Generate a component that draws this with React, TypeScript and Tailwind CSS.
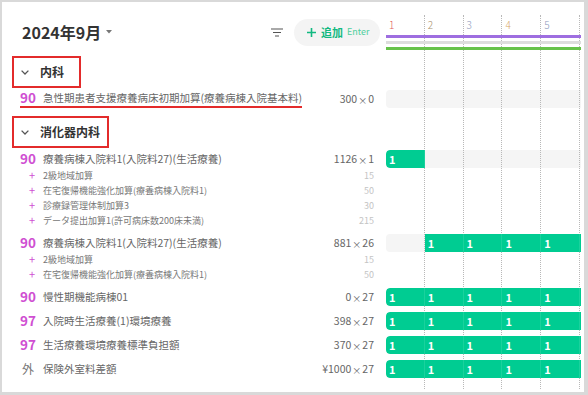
import React from 'react'

type Cell = 'e' | 'g'

interface Item {
  code: string
  name: string
  amount: string
  count: string
  cells: Cell[]
  subs?: Array<{ name: string; value: string }>
  underline?: boolean
  outside?: boolean
}

const days = [
  { d: 1, c: 'text-[#e05a5a]' },
  { d: 2, c: 'text-[#a8906c]' },
  { d: 3, c: 'text-[#8a98bb]' },
  { d: 4, c: 'text-[#d6a565]' },
  { d: 5, c: 'text-[#8a98bb]' },
]

const allGreen: Cell[] = ['g', 'g', 'g', 'g', 'g', 'g']

const naika: Item[] = [
  {
    code: '90',
    name: '急性期患者支援療養病床初期加算(療養病棟入院基本料)',
    amount: '300',
    count: '0',
    cells: ['e', 'e', 'e', 'e', 'e', 'e'],
    underline: true,
  },
]

const shoukaki: Item[] = [
  {
    code: '90',
    name: '療養病棟入院料1(入院料27)(生活療養)',
    amount: '1126',
    count: '1',
    cells: ['g', 'e', 'e', 'e', 'e', 'e'],
    subs: [
      { name: '2級地域加算', value: '15' },
      { name: '在宅復帰機能強化加算(療養病棟入院料1)', value: '50' },
      { name: '診療録管理体制加算3', value: '30' },
      { name: 'データ提出加算1(許可病床数200床未満)', value: '215' },
    ],
  },
  {
    code: '90',
    name: '療養病棟入院料1(入院料27)(生活療養)',
    amount: '881',
    count: '26',
    cells: ['e', 'g', 'g', 'g', 'g', 'g'],
    subs: [
      { name: '2級地域加算', value: '15' },
      { name: '在宅復帰機能強化加算(療養病棟入院料1)', value: '50' },
    ],
  },
  { code: '90', name: '慢性期機能病棟01', amount: '0', count: '27', cells: allGreen },
  { code: '97', name: '入院時生活療養(1)環境療養', amount: '398', count: '27', cells: allGreen },
  { code: '97', name: '生活療養環境療養標準負担額', amount: '370', count: '27', cells: allGreen },
  { code: '外', name: '保険外室料差額', amount: '¥1000', count: '27', cells: allGreen, outside: true },
]

const Chevron = () => (
  <svg width="8" height="5" viewBox="0 0 8 5" fill="none">
    <path d="M0.6 0.6 L4 4 L7.4 0.6" stroke="#555" strokeWidth="1.3" />
  </svg>
)

const SectionHeader: React.FC<{ title: string; width: string; top: string }> = ({ title, width, top }) => (
  <div className={`${top} h-[32px] ml-[10px] ${width} border-2 border-[#e32b2b] flex items-center pl-[7px]`}>
    <Chevron />
    <span className="ml-[11px] text-[12px] font-bold text-[#333]">{title}</span>
  </div>
)

const Track: React.FC<{ cells: Cell[] }> = ({ cells }) => (
  <div className="w-[195px] h-[18px] overflow-hidden rounded-l-[4px] bg-[#f5f5f5] flex">
    {cells.map((c, i) =>
      c === 'g' ? (
        <div
          key={i}
          className={`relative z-20 w-[38.8px] shrink-0 h-full bg-[#00cc92] border-r border-white/10 pl-[3px] text-white font-bold text-[11px] leading-[18px] ${
            i === 0 ? 'rounded-l-[4px]' : ''
          }`}
        >
          {i < 5 ? '1' : ''}
        </div>
      ) : (
        <div key={i} className="w-[38.8px] shrink-0 h-full" />
      )
    )}
  </div>
)

const ItemRow: React.FC<{ item: Item; top: string }> = ({ item, top }) => (
  <>
    <div className={`flex h-[18px] ${top}`}>
      <div className="w-[384px] flex items-stretch pl-[18px] pr-[12px]">
        <div className={`flex items-center min-w-0 ${item.underline ? 'border-b-2 border-[#e32b2b]' : ''}`}>
          <span
            className={`w-[23px] shrink-0 leading-none ${
              item.outside ? 'text-[12px] text-[#777] pl-[2px]' : 'text-[13.5px] font-bold text-[#cf4fd2]'
            }`}
          >
            {item.code}
          </span>
          <span className="text-[10.5px] leading-none text-[#666] whitespace-nowrap">{item.name}</span>
        </div>
        <div className="flex-1" />
        <div className="flex items-center text-[10.5px] leading-none text-[#666] whitespace-nowrap">
          <span>{item.amount}</span>
          <span className="text-[9px] mx-[1px] translate-y-[1px]">×</span>
          <span>{item.count}</span>
        </div>
      </div>
      <Track cells={item.cells} />
    </div>
    {item.subs?.map((s, i) => (
      <div key={i} className="flex h-[15px]">
        <div className="w-[384px] flex items-center pl-[18px] pr-[12px] leading-none">
          <span className="w-[23px] shrink-0 pl-[9px] text-[11px] text-[#cf4fd2]">+</span>
          <span className="text-[9px] text-[#777] whitespace-nowrap">{s.name}</span>
          <div className="flex-1" />
          <span className="text-[9px] text-[#c4c4c4]">{s.value}</span>
        </div>
      </div>
    ))}
  </>
)

export default function App() {
  return (
    <div
      className="w-[588px] h-[395px] bg-[#d9d9d9] pt-[2px] pl-[2px] pr-[4px] pb-[3px]"
      style={{ fontFamily: '"Noto Sans CJK JP", "Noto Sans", sans-serif' }}
    >
      <div className="relative h-full bg-white flex flex-col">
        {/* day grid lines */}
        <div className="absolute top-[13px] bottom-[3px] left-[384px] w-[195px] overflow-hidden flex z-10 pointer-events-none">
          {[0, 1, 2, 3, 4, 5].map(i => (
            <div key={i} className="w-[38.8px] shrink-0 h-full border-r border-dotted border-[#b8b8b8]" />
          ))}
        </div>

        {/* header */}
        <div className="flex h-[52px] shrink-0">
          <div className="w-[384px] flex items-center pt-[8px] pl-[20px] pr-[6px]">
            <span className="text-[16px] font-semibold text-[#333]">2024年9月</span>
            <svg className="ml-[5px]" width="6" height="4" viewBox="0 0 6 4">
              <path d="M0 0 H6 L3 3.5 Z" fill="#777" />
            </svg>
            <div className="flex-1" />
            <svg width="12" height="9" viewBox="0 0 12 9" fill="none">
              <path d="M0 1 H12 M2 4.5 H10 M4 8 H8" stroke="#555" strokeWidth="1.2" />
            </svg>
            <button className="ml-[11px] w-[86px] h-[27px] rounded-full bg-[#f4f4f4] flex items-center pl-[13px]">
              <svg width="9" height="9" viewBox="0 0 9 9" fill="none">
                <path d="M4.5 0 V9 M0 4.5 H9" stroke="#12b981" strokeWidth="1.6" />
              </svg>
              <span className="ml-[5px] text-[11px] font-bold text-[#12b981]">追加</span>
              <span className="ml-[4px] text-[9px] text-[#4ecf9d]">Enter</span>
            </button>
          </div>
          <div className="w-[195px] overflow-hidden pt-[13px]">
            <div className="flex h-[18px] items-center">
              {days.map(d => (
                <div key={d.d} className={`w-[38.8px] shrink-0 pl-[3px] text-[10px] font-light ${d.c}`}>
                  {d.d}
                </div>
              ))}
            </div>
            <div className="relative z-20 mt-[2px] h-[3px] bg-[#9e6ee0]" />
            <div className="relative z-20 mt-[3px] h-[3px] bg-[#dddddd]" />
            <div className="relative z-20 mt-[3px] h-[3px] bg-[#66c24a]" />
          </div>
        </div>

        <SectionHeader title="内科" width="w-[69px]" top="mt-[2px]" />
        {naika.map((it, i) => (
          <ItemRow key={i} item={it} top="mt-[2px]" />
        ))}

        <SectionHeader title="消化器内科" width="w-[97px]" top="mt-[8px]" />
        {shoukaki.map((it, i) => (
          <ItemRow key={i} item={it} top={i === 0 ? 'mt-[2px]' : 'mt-[6px]'} />
        ))}
      </div>
    </div>
  )
}
